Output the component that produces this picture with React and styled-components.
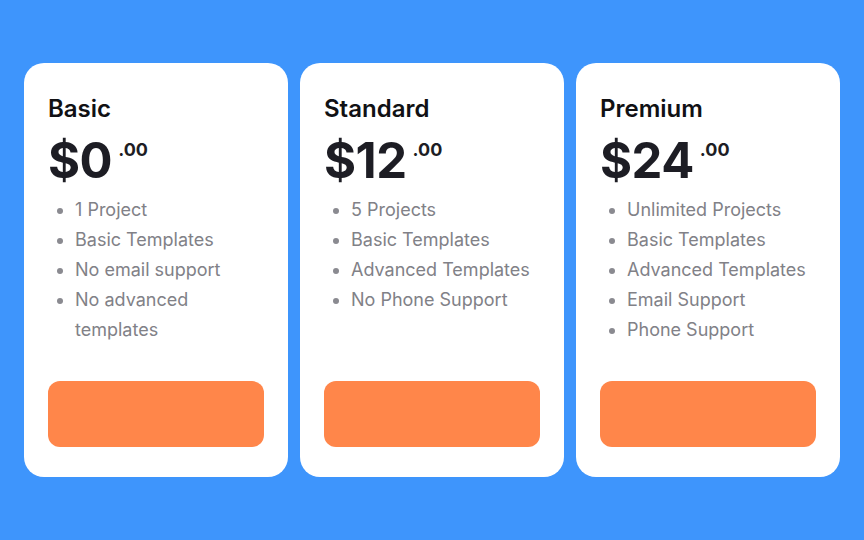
import React from 'react'
import styled, { createGlobalStyle } from 'styled-components'

const plans = [
  { name: 'Basic', price: '0', features: ['1 Project', 'Basic Templates', 'No email support', 'No advanced templates'] },
  { name: 'Standard', price: '12', features: ['5 Projects', 'Basic Templates', 'Advanced Templates', 'No Phone Support'] },
  { name: 'Premium', price: '24', features: ['Unlimited Projects', 'Basic Templates', 'Advanced Templates', 'Email Support', 'Phone Support'] },
]

const Global = createGlobalStyle`
  html, body {
    margin: 0;
    padding: 0;
    background: #3e95fc;
  }
  body {
    font-family: Inter, "Noto Sans", sans-serif;
  }
`

const Page = styled.div`
  width: 864px;
  height: 540px;
  display: flex;
  align-items: center;
  justify-content: center;
  gap: 12px;
`

const Card = styled.div`
  width: 264px;
  height: 414px;
  box-sizing: border-box;
  background: #fff;
  border-radius: 20px;
  padding: 33px 24px 30px;
  display: flex;
  flex-direction: column;
`

const Title = styled.h2`
  margin: 0;
  font-size: 24px;
  line-height: 26px;
  font-weight: 600;
  color: #111114;
`

const Price = styled.div`
  display: flex;
  align-items: flex-start;
  margin-top: 15px;
  color: #1d1d24;
  font-weight: 700;
`

const Amount = styled.span`
  font-size: 49px;
  line-height: 48px;
  letter-spacing: -0.5px;
`

const Cents = styled.span`
  font-size: 18px;
  line-height: 20px;
  margin-left: 6px;
  margin-top: 3px;
`

const List = styled.ul`
  margin: 10px 0 0;
  padding-left: 27px;
  color: #818187;
  font-size: 18px;
  line-height: 30px;
  li::marker {
    color: #8a8a90;
  }
`

const Button = styled.button`
  margin-top: auto;
  width: 100%;
  height: 66px;
  border: none;
  border-radius: 12px;
  background: #ff864a;
  cursor: pointer;
`

export default function App() {
  return (
    <>
      <Global />
      <Page>
        {plans.map((p) => (
          <Card key={p.name}>
            <Title>{p.name}</Title>
            <Price>
              <Amount>${p.price}</Amount>
              <Cents>.00</Cents>
            </Price>
            <List>
              {p.features.map((f) => (
                <li key={f}>{f}</li>
              ))}
            </List>
            <Button />
          </Card>
        ))}
      </Page>
    </>
  )
}
